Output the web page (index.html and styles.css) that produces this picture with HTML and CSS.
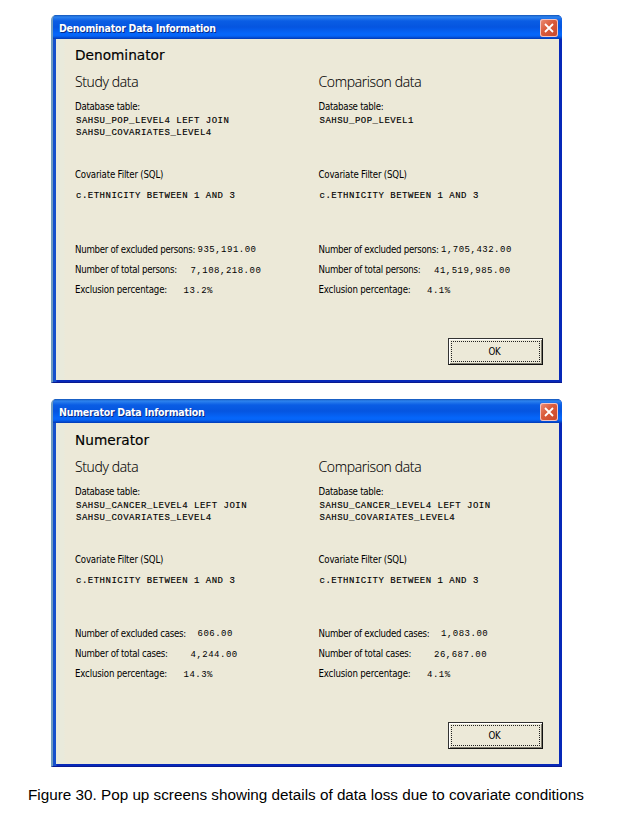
FILE: index.html
```html
<!DOCTYPE html>
<html lang="en">
<head>
<meta charset="utf-8">
<title>Figure 30</title>
<link rel="stylesheet" href="styles.css">
</head>
<body>
<figure class="figure">
  <section class="window">
    <header class="titlebar"><span class="title">Denominator Data Information</span>
      <span class="close"><svg width="18" height="18" viewBox="0 0 18 18"><path d="M5 5l8 8M13 5l-8 8" stroke="#fff" stroke-width="1.8" fill="none"/></svg></span>
    </header>
    <div class="content">
      <h1 class="heading">Denominator</h1>
      <div class="columns">
        <div class="col">
          <h2 class="sub">Study data</h2>
          <p class="label">Database table:</p>
          <div class="code">SAHSU_POP_LEVEL4 LEFT JOIN<br>SAHSU_COVARIATES_LEVEL4</div>
          <p class="label filter-label">Covariate Filter (SQL)</p>
          <div class="filter">c.ETHNICITY BETWEEN 1 AND 3</div>
          <div class="row"><span class="key k1">Number of excluded persons:</span><span class="num">935,191.00</span></div>
          <div class="row"><span class="key k2">Number of total persons:</span><span class="num">7,108,218.00</span></div>
          <div class="row"><span class="key k3">Exclusion percentage:</span><span class="num">13.2%</span></div>
        </div>
        <div class="col">
          <h2 class="sub">Comparison data</h2>
          <p class="label">Database table:</p>
          <div class="code">SAHSU_POP_LEVEL1</div>
          <p class="label filter-label">Covariate Filter (SQL)</p>
          <div class="filter">c.ETHNICITY BETWEEN 1 AND 3</div>
          <div class="row"><span class="key k1">Number of excluded persons:</span><span class="num">1,705,432.00</span></div>
          <div class="row"><span class="key k2">Number of total persons:</span><span class="num">41,519,985.00</span></div>
          <div class="row"><span class="key k3">Exclusion percentage:</span><span class="num">4.1%</span></div>
        </div>
      </div>
      <button class="ok"><span class="focus">OK</span></button>
    </div>
  </section>

  <section class="window">
    <header class="titlebar"><span class="title">Numerator Data Information</span>
      <span class="close"><svg width="18" height="18" viewBox="0 0 18 18"><path d="M5 5l8 8M13 5l-8 8" stroke="#fff" stroke-width="1.8" fill="none"/></svg></span>
    </header>
    <div class="content lower">
      <h1 class="heading">Numerator</h1>
      <div class="columns">
        <div class="col">
          <h2 class="sub">Study data</h2>
          <p class="label">Database table:</p>
          <div class="code">SAHSU_CANCER_LEVEL4 LEFT JOIN<br>SAHSU_COVARIATES_LEVEL4</div>
          <p class="label filter-label">Covariate Filter (SQL)</p>
          <div class="filter">c.ETHNICITY BETWEEN 1 AND 3</div>
          <div class="row"><span class="key k1">Number of excluded cases:</span><span class="num">606.00</span></div>
          <div class="row"><span class="key k2">Number of total cases:</span><span class="num">4,244.00</span></div>
          <div class="row"><span class="key k3">Exclusion percentage:</span><span class="num">14.3%</span></div>
        </div>
        <div class="col">
          <h2 class="sub">Comparison data</h2>
          <p class="label">Database table:</p>
          <div class="code">SAHSU_CANCER_LEVEL4 LEFT JOIN<br>SAHSU_COVARIATES_LEVEL4</div>
          <p class="label filter-label">Covariate Filter (SQL)</p>
          <div class="filter">c.ETHNICITY BETWEEN 1 AND 3</div>
          <div class="row"><span class="key k1">Number of excluded cases:</span><span class="num">1,083.00</span></div>
          <div class="row"><span class="key k2">Number of total cases:</span><span class="num">26,687.00</span></div>
          <div class="row"><span class="key k3">Exclusion percentage:</span><span class="num">4.1%</span></div>
        </div>
      </div>
      <button class="ok"><span class="focus">OK</span></button>
    </div>
  </section>
  <figcaption class="caption">Figure 30. Pop up screens showing details of data loss due to covariate conditions</figcaption>
</figure>
</body>
</html>
```
FILE: styles.css
```css
* { box-sizing: border-box; }
body { margin: 0; background: #fff; color: #000; }
.figure { margin: 0; padding-top: 15px; width: 618px; height: 813px; overflow: hidden; }
.window {
  width: 511px; height: 368px; margin: 0 0 16px 51px;
  background: linear-gradient(90deg, #1550cc 3px, #0728b8 4px); border-radius: 5px 5px 0 0; overflow: hidden;
  border-left: 2px solid #6f9cc0; border-bottom: 1px solid #0a1a90;
}
.titlebar {
  height: 24px; padding: 0 4px 0 6px;
  display: flex; align-items: center; justify-content: space-between;
  background: linear-gradient(#1254b8 0, #2d83ee 2px, #0a5de4 6px, #0555e0 12px, #0566fb 19px, #0563f5 21px, #0238b4 24px);
}
.title {
  font: bold 10.5px/24px "DejaVu Sans Condensed", "DejaVu Sans", sans-serif; font-stretch: condensed;
  letter-spacing: -0.25px; color: #fff; text-shadow: 1px 1px 0 #062a86; white-space: nowrap; padding-top: 2px;
}
.close {
  width: 18px; height: 18px; display: flex; margin-top: 1px;
  border-radius: 3px; background: linear-gradient(135deg, #ec9079, #da5a3a 45%, #c8472a);
  box-shadow: inset 0 0 0 1px #efc5c6;
}
.content {
  height: 341px; margin: 0 3px 0 3px; padding: 6px 0 0 19px;
  background: linear-gradient(90deg, #e9eadb 8px, #ece9d8 9px);
}
.heading, .sub, .label { margin: 0; font-weight: normal; white-space: nowrap; }
.heading { height: 20px; font-family: "DejaVu Sans", sans-serif; font-size: 13.7px; line-height: 20px; -webkit-text-stroke: 0.15px #000; }
.columns { display: grid; grid-template-columns: 243.5px 1fr; }
.sub { height: 34px; font: 14px/34px "Open Sans", sans-serif; font-weight: 300; letter-spacing: -0.36px; -webkit-text-stroke: 0.1px #000; }
.label, .key, .focus { font: 9.6px/14px "DejaVu Sans Condensed", "DejaVu Sans", sans-serif; font-stretch: condensed; letter-spacing: -0.25px; }
.label { height: 14px; padding-top: 1px; }
.filter-label { letter-spacing: -0.18px; }
.code, .filter, .num { font: 9px/11.5px "Liberation Mono", monospace; letter-spacing: 0.5px; white-space: nowrap; }
.code, .filter { -webkit-text-stroke: 0.15px #000; }
.code { height: 54px; padding: 3px 0 0 1px; }
.filter { height: 59px; padding: 10px 0 0 1px; }
.row { display: flex; align-items: center; height: 20.3px; white-space: nowrap; }
.key { margin-top: -1px; }
.num { padding-top: 2px; }
.k1 { width: 122.5px; letter-spacing: -0.26px; }
.k2 { width: 115.5px; }
.k3 { width: 108.5px; letter-spacing: -0.16px; }
.lower .filter { height: 58px; }
.lower .columns { padding-top: 1px; }
.lower .heading { padding-top: 1px; }
.ok {
  display: block; width: 95px; height: 27px; margin: 37px 0 0 373px; padding: 2px 2px 1px;
  background: #ece9d8; border: 1px solid #333; border-right-color: #111; border-bottom-color: #111; border-radius: 0;
  box-shadow: inset 1px 1px 0 #fff, inset -1px -1px 0 #807d6f;
}
.focus { display: block; height: 21px; border: 1px dotted #222; line-height: 19px; text-align: center; padding-right: 2px; }
.caption { font: 15.27px/20px "Liberation Sans", Arial, sans-serif; margin: 0 0 0 28px; padding-top: 2px; white-space: nowrap; }
```
